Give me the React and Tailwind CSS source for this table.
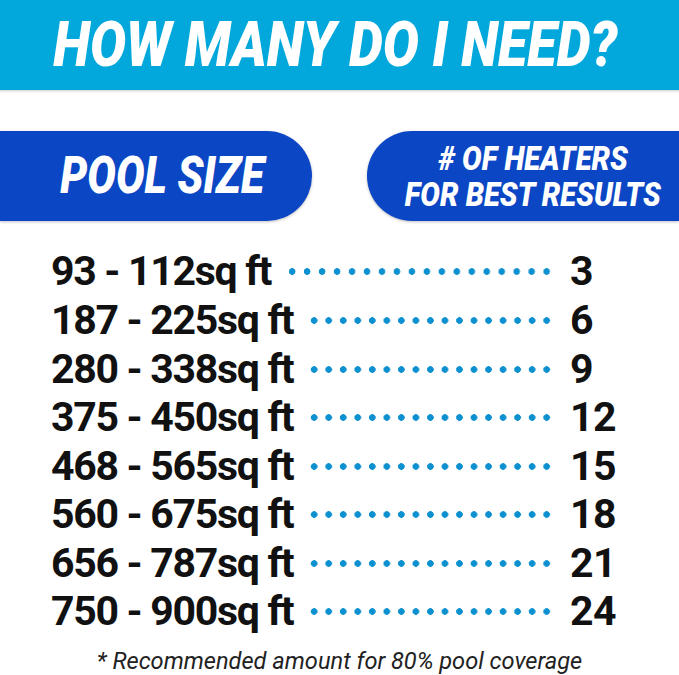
import React from "react";

const rows = [
  ["93 - 112sq ft", "3"],
  ["187 - 225sq ft", "6"],
  ["280 - 338sq ft", "9"],
  ["375 - 450sq ft", "12"],
  ["468 - 565sq ft", "15"],
  ["560 - 675sq ft", "18"],
  ["656 - 787sq ft", "21"],
  ["750 - 900sq ft", "24"],
];

function Row({ size, count }) {
  return (
    <div className="flex h-[48.57px] items-center">
      <span className="whitespace-nowrap pl-[51px] text-[41px] font-bold leading-none tracking-[-1.3px] text-[#111]">
        {size}
      </span>
      <div className="ml-[14px] mr-[16px] h-[7px] flex-1 bg-[radial-gradient(circle,#0c90cf_3px,transparent_3.6px)] bg-[length:14.3px_7px] bg-repeat-space" />
      <span className="w-[109px] text-[41px] font-bold leading-none tracking-[-0.5px] text-[#111]">{count}</span>
    </div>
  );
}

export default function App() {
  return (
    <div className="h-[675px] w-full overflow-hidden bg-white font-['Roboto',sans-serif]">
      <div className="flex h-[90px] items-center justify-center bg-[#02a8dc] pr-[8px]">
        <h1 className="scale-x-[0.87] whitespace-nowrap text-[62px] font-black italic leading-none text-white">
          HOW MANY DO I NEED?
        </h1>
      </div>
      <div className="h-[3px] bg-gradient-to-b from-[#d8d8d8] to-white" />

      <div className="mt-[38px] flex justify-between">
        <div className="flex h-[90px] w-[312px] items-center justify-center rounded-r-full bg-[#0b46c4] pl-[12px] shadow-[0_1px_3px_rgba(0,0,0,0.25)]">
          <span className="scale-x-[0.82] whitespace-nowrap text-[52px] font-black italic leading-none text-white">
            POOL SIZE
          </span>
        </div>
        <div className="flex h-[90px] w-[312px] flex-col items-center justify-center rounded-l-full bg-[#0b46c4] pl-[20px] shadow-[0_1px_3px_rgba(0,0,0,0.25)]">
          <span className="scale-x-[0.86] whitespace-nowrap text-[34px] font-black italic leading-[36px] text-white">
            # OF HEATERS
          </span>
          <span className="scale-x-[0.86] whitespace-nowrap text-[34px] font-black italic leading-[36px] text-white">
            FOR BEST RESULTS
          </span>
        </div>
      </div>

      <div className="mt-[26.7px]">
        {rows.map(([size, count]) => (
          <Row key={size} size={size} count={count} />
        ))}
      </div>

      <p className="mt-[8px] text-center text-[23.6px] italic leading-[34px] text-[#222]">
        * Recommended amount for 80% pool coverage
      </p>
    </div>
  );
}
